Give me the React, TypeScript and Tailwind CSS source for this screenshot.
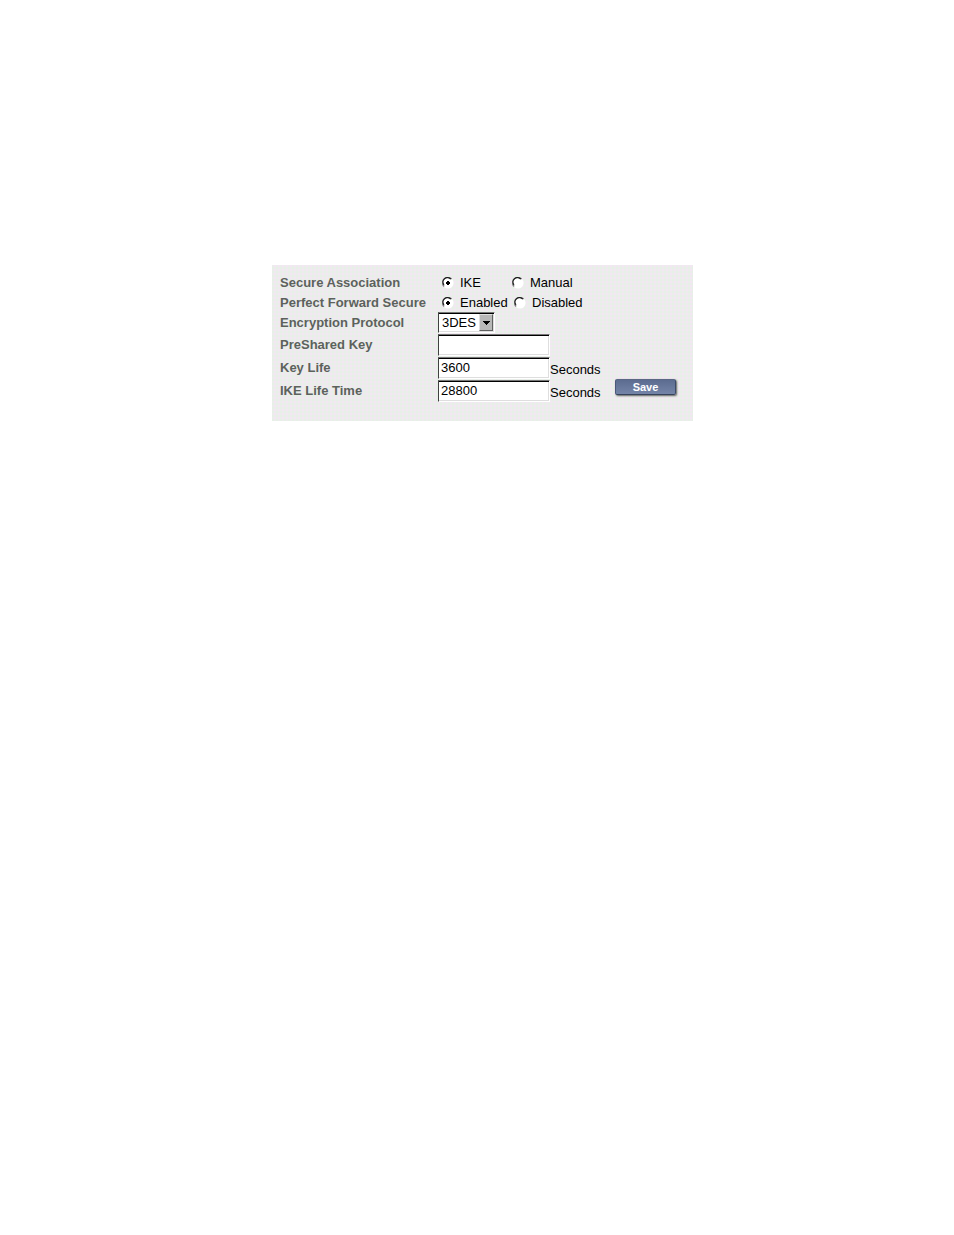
import React, { useState } from "react";

const sunken =
  "border border-t-[#777777] border-l-[#404040] border-r-white border-b-white bg-white text-black outline-none shadow-[inset_0_1px_#000000,inset_-1px_-1px_#dedede]";

const labelText = "w-[158px] shrink-0 font-bold text-[#5c625c]";

type RadioProps = {
  name: string;
  label: string;
  checked: boolean;
  onSelect: () => void;
};

function Radio({ name, label, checked, onSelect }: RadioProps) {
  return (
    <label className="flex items-center gap-1.5">
      <span className="relative block h-3 w-3">
        <input
          type="radio"
          name={name}
          checked={checked}
          onChange={onSelect}
          className="absolute inset-0 h-3 w-3 appearance-none"
        />
        <svg viewBox="0 0 12 12" className="pointer-events-none absolute inset-0 h-3 w-3" aria-hidden="true">
          <circle cx="6" cy="6" r="5.6" fill="#fff" />
          <path d="M2.1 9.6A5 5 0 0 1 9.6 2.1" fill="none" stroke="#808080" strokeWidth="1.4" />
          <path d="M2 7.8A4.4 4.4 0 0 1 8.8 2.2" fill="none" stroke="#181818" strokeWidth="1.1" />
          {checked && <path fill="#000" shapeRendering="crispEdges" d="M5 4h2v1h1v2h-1v1h-2v-1h-1v-2h1z" />}
        </svg>
      </span>
      {label}
    </label>
  );
}

type FieldProps = { id: string; label: string; value: string; unit?: string };

function Field({ id, label, value, unit }: FieldProps) {
  return (
    <div className="flex h-[23px] items-center">
      <label htmlFor={id} className={labelText}>
        {label}
      </label>
      <input id={id} type="text" defaultValue={value} className={`${sunken} h-[22px] w-28 px-0.5`} />
      {unit && <span className="self-end pb-px">{unit}</span>}
    </div>
  );
}

export default function App() {
  const [association, setAssociation] = useState("ike");
  const [pfs, setPfs] = useState("enabled");

  return (
    <main className="min-h-screen bg-white pt-[265px] pl-[11px] font-['Liberation_Sans',Arial,sans-serif] text-[13px] leading-4 text-black">
      <form
        onSubmit={(e) => e.preventDefault()}
        className="mx-auto max-w-[421px] bg-[#ececec] bg-[conic-gradient(#f3e7f3_25%,#ececec_25%_50%,#e6f0e6_50%_75%,#ececec_75%)] bg-size-[4px_4px] pt-2 pr-[17px] pb-[19px] pl-2"
      >
        <div className="flex h-5 items-center" role="radiogroup" aria-labelledby="association">
          <span id="association" className={labelText}>
            Secure Association
          </span>
          <div className="flex pl-1">
            <div className="w-[70px]">
              <Radio name="association" label="IKE" checked={association === "ike"} onSelect={() => setAssociation("ike")} />
            </div>
            <Radio name="association" label="Manual" checked={association === "manual"} onSelect={() => setAssociation("manual")} />
          </div>
        </div>

        <div className="flex h-[19px] items-center" role="radiogroup" aria-labelledby="pfs">
          <span id="pfs" className={labelText}>
            Perfect Forward Secure
          </span>
          <div className="flex pl-1">
            <div className="w-[72px]">
              <Radio name="pfs" label="Enabled" checked={pfs === "enabled"} onSelect={() => setPfs("enabled")} />
            </div>
            <Radio name="pfs" label="Disabled" checked={pfs === "disabled"} onSelect={() => setPfs("disabled")} />
          </div>
        </div>

        <div className="flex h-[21px] items-center">
          <label htmlFor="encryption" className={labelText}>
            Encryption Protocol
          </label>
          <div className="relative">
            <select id="encryption" className={`${sunken} block h-[21px] w-[57px] appearance-none pl-[3px]`}>
              <option>3DES</option>
              <option>DES</option>
            </select>
            <span className="pointer-events-none absolute inset-y-0.5 right-0.5 flex w-3.5 items-center justify-center border border-t-[#e0e0e0] border-r-[#606060] border-b-[#606060] border-l-[#e0e0e0] bg-[#b8b8b8]">
              <svg viewBox="0 0 7 4" className="h-1 w-[7px]" shapeRendering="crispEdges" aria-hidden="true">
                <path d="M0 0h7v1h-1v1h-1v1h-1v1h-1v-1h-1v-1h-1v-1h-1z" />
              </svg>
            </span>
          </div>
        </div>

        <Field id="preshared" label="PreShared Key" value="" />
        <Field id="keylife" label="Key Life" value="3600" unit="Seconds" />
        <div className="flex items-start justify-between">
          <Field id="ikelife" label="IKE Life Time" value="28800" unit="Seconds" />
          <button
            type="submit"
            className="h-4 w-[61px] rounded-xs border border-t-[#5a6884] border-r-[#3c4a68] border-b-[#36435c] border-l-[#4a5878] bg-linear-to-b from-[#5c6c90] to-[#7484a8] text-[11px] leading-3 font-bold text-white shadow-[1px_1px_2px_#606060]"
          >
            Save
          </button>
        </div>
      </form>
    </main>
  );
}
